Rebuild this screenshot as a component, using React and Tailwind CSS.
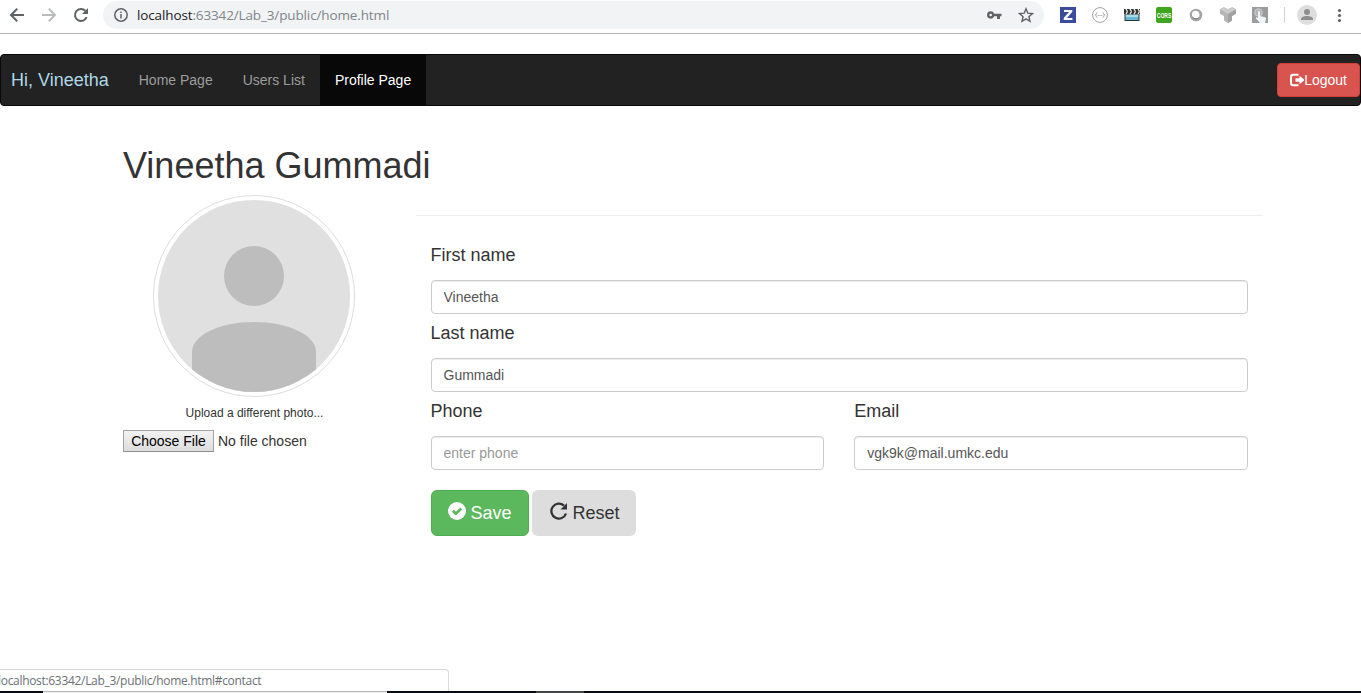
import React from "react";

function Toolbar() {
  return (
    <header className="flex h-[34px] w-full shrink-0 items-start border-b border-[#b6b4b6] bg-white">
      <div className="flex h-[30px] w-[103px] items-center pl-[9px]">
        <svg width="16" height="16" viewBox="0 0 16 16" fill="none" stroke="#5f6368" strokeWidth="2"><path d="M15 8H2.5M8.2 1.8L2 8l6.200 6.200" /></svg>
        <svg className="ml-4" width="16" height="16" viewBox="0 0 16 16" fill="none" stroke="#babcbe" strokeWidth="2"><path d="M1 8h12.500M7.800 1.800L14 8l-6.200 6.200" /></svg>
        <svg className="ml-4" width="16" height="16" viewBox="0 0 16 16" fill="none" stroke="#5f6368" strokeWidth="2"><path d="M13.600 10.200A6 6 0 1 1 12.300 3.800" /><path d="M15 1v6H9z" fill="#5f6368" stroke="none" /></svg>
      </div>
      <div className="mt-px flex h-7 w-[941px] items-center rounded-full bg-[#f1f3f4] pl-[11px] pr-[10px] font-['Open_Sans',sans-serif]">
        <svg width="14" height="14" viewBox="0 0 14 14" fill="none" stroke="#5f6368" strokeWidth="1.5"><circle cx="7" cy="7" r="6.200" /><path d="M7 6v4.500M7 3.500v1.500" /></svg>
        <span className="ml-[9px] whitespace-nowrap text-[13.500px] leading-5 tracking-[-0.13px] text-[#80868b]"><span className="text-[#202124]">localhost</span>:63342/Lab_3/public/home.html</span>
        <svg className="ml-auto" width="16" height="16" viewBox="0 0 16 16" fill="#5f6368"><path fillRule="evenodd" d="M4.700 4.300a3.700 3.700 0 1 0 3.500 5H11V12h3V9.300h1.500V6.700H8.200a3.700 3.700 0 0 0-3.500-2.400zm0 2.400a1.300 1.300 0 1 1 0 2.600 1.300 1.300 0 0 1 0-2.600z" /></svg>
        <svg className="ml-4" width="16" height="16" viewBox="0 0 16 16" fill="none" stroke="#5f6368" strokeWidth="1.400"><path d="M8 1.800l1.800 4.400 4.700.4-3.600 3.100 1.100 4.600L8 11.900l-4 2.400 1.100-4.600-3.600-3.100 4.700-.4z" /></svg>
      </div>
      <div className="flex h-[30px] items-center gap-4 pl-4">
        <svg width="16" height="16"><path fill="#3b4ba0" d="M0 0h16v16H0z" /><path fill="#fff" d="M4 3h8.300v1.800L7 10.900h5.400V13H3.700v-1.900L9 5.100H4z" /></svg>
        <svg width="16" height="16" fill="none" stroke="#a3a3a3"><circle cx="8" cy="8" r="7.400" /><path d="M5.300 5.500c-1.500 0-.5 2.500-2 2.500 1.500 0 .5 2.500 2 2.500M10.700 5.500c1.500 0 .5 2.500 2 2.500-1.500 0-.5 2.500-2 2.500" /><path d="M5.800 8.500h4.500" strokeDasharray="1 .7" /></svg>
        <svg width="16" height="16"><path fill="#333" d="M0 2h16v5H0zM.5 7h15v7H.5z" /><path stroke="#fff" strokeWidth="1.200" d="M2 2l1.500 2.500M6 2l1.500 2.500M10 2l1.500 2.500M14 2l1.500 2.500M3.500 4.500L2 7M7.500 4.500L6 7M11.500 4.500L10 7M15.500 4.500L14 7" /><path fill="#a9dceb" d="M1.500 7.500h13V10h-13z" /><path fill="#63b8d3" d="M1.500 10h13v3h-13z" /></svg>
        <div className="flex h-4 w-4 items-center justify-center rounded-[2px] bg-[#3fa51c] text-[5px] font-bold leading-4 text-white"><span className="scale-y-150">CORS</span></div>
        <svg width="16" height="16"><circle cx="8" cy="8" r="4.900" fill="none" stroke="#a4a4a4" strokeWidth="2.800" /><circle cx="7.500" cy="7.300" r="3.500" fill="#fafafa" /><path d="M4.500 10.200a4.600 4.600 0 0 0 6.500.5" fill="none" stroke="#777" /></svg>
        <svg width="16" height="16"><path fill="#b5b5b5" d="M0 2.200L4 .3l4 1.900 4-1.900 4 1.900v4.600l-4 2.200v4.500L8 16l-4-2.500V9L0 6.800z" /><path fill="#a2a2a2" d="M8 7l4-2.500 4-2.300v4.600l-4 2.200v4.500L8 16z" /><path fill="#cbcbcb" d="M0 2.200L4 .3l4 2 4-2 4 1.900-4 2.300L8 7 4 4.500z" /></svg>
        <svg width="16" height="16"><path fill="#9c9c9c" d="M0 0h16v16H0z" /><circle cx="6.500" cy="5.500" r="3.800" fill="#b4b4b4" stroke="#cfcfcf" /><path fill="#eef4f8" d="M6 5c0-1.300 2-1.300 2 0v4l5 1.200c1 .3 1.200 1 1 2L13 16H8l-4-4.500c-.5-.8.600-1.500 1.300-1L6 11z" /></svg>
      </div>
      <div className="ml-4 mt-[7px] h-4 w-px bg-[#cfd1d3]" />
      <svg className="ml-3 mt-[5px]" width="20" height="20"><circle cx="10" cy="10" r="10" fill="#dedede" /><circle cx="10" cy="7" r="3" fill="#8e8e8e" /><path d="M4 15v-1c0-4 12-4 12 0v1z" fill="#8e8e8e" /></svg>
      <svg className="ml-5 mt-2" width="6" height="16" fill="#5f6368"><circle cx="2.500" cy="2.500" r="1.600" /><circle cx="2.500" cy="7.500" r="1.600" /><circle cx="2.500" cy="12.500" r="1.600" /></svg>
    </header>
  );
}

function NavBar() {
  return (
    <nav className="mt-5 flex h-[52px] w-full shrink-0 items-stretch rounded-[4px] border border-[#080808] bg-[#222] text-sm leading-5 text-[#9d9d9d]">
      <a className="px-[10px] py-[15px] text-lg leading-5 text-[lightblue]">Hi, Vineetha</a>
      <a className="ml-[5px] px-[15px] py-[15px]">Home Page</a>
      <a className="px-[15px] py-[15px]">Users List</a>
      <a className="bg-[#080808] px-[15px] py-[15px] text-white">Profile Page</a>
      <button className="ml-auto mt-2 flex h-[34px] items-center rounded-[4px] border border-[#d43f3a] bg-[#d9534f] px-3 text-white">
        <svg width="14" height="14" viewBox="0 0 14 14" fill="#fff"><path d="M8.500 .8H3a3 3 0 0 0-3 3v6.400a3 3 0 0 0 3 3h5.500v-2H3.500A1.500 1.500 0 0 1 2 9.700V4.300a1.500 1.500 0 0 1 1.500-1.500h5z" /><path d="M9.500 2.800L14.500 7l-5 4.200V8.700H5.500V5.300h4z" /></svg>
        Logout
      </button>
    </nav>
  );
}

function Field({ label, value, placeholder }) {
  return (
    <label className="block min-w-0 flex-1">
      <span className="block text-lg leading-5">{label}</span>
      <input
        className="mt-[15px] block h-[34px] w-full rounded-[4px] border border-[#ccc] bg-white px-3 text-sm text-[#555] shadow-[inset_0_1px_1px_rgba(0,0,0,0.075)] placeholder:text-[#999]"
        defaultValue={value}
        placeholder={placeholder}
      />
    </label>
  );
}

function Avatar() {
  return (
    <div className="h-[202px] w-[202px] rounded-full border border-[#ddd] p-1">
      <svg className="block rounded-full" width="192" height="192" viewBox="0 0 192 192">
        <path fill="#e0e0e0" d="M0 0h192v192H0z" />
        <circle cx="96" cy="76" r="30" fill="#bdbdbd" />
        <path fill="#bdbdbd" d="M34 192v-40c0-17 28-30 62-30s62 13 62 30v40z" />
      </svg>
    </div>
  );
}

export default function App() {
  return (
    <div className="flex h-[693px] w-[1361px] flex-col overflow-hidden bg-white font-['Liberation_Sans',Arial,sans-serif] text-[#333]">
      <Toolbar />
      <NavBar />
      <main className="flex-1 pl-[123px]">
        <h1 className="mt-10 text-[36px] leading-[39px]">Vineetha Gummadi</h1>
        <div className="mt-[10px] flex">
          <aside className="flex w-[262px] flex-col items-center">
            <Avatar />
            <p className="mt-[10px] pl-px text-xs leading-[13px]">Upload a different photo...</p>
            <div className="mt-[10px] flex h-[22px] items-center gap-1 self-start text-sm">
              <button className="h-[22px] w-[91px] border border-[#a2a2a2] border-b-[#8e8e8e] bg-linear-to-b from-[#f3f3f3] to-[#ddd] text-center leading-5 text-black">Choose File</button>
              <span>No file chosen</span>
            </div>
          </aside>
          <section className="ml-[30.500px] mt-5 w-[847.500px]">
            <hr className="border-[#eee]" />
            <form className="px-[15px] pt-[29px]">
              <div className="flex"><Field label="First name" value="Vineetha" /></div>
              <div className="mt-[9px] flex"><Field label="Last name" value="Gummadi" /></div>
              <div className="mt-[9px] flex gap-[30px]">
                <Field label="Phone" placeholder="enter phone" />
                <Field label="Email" value="vgk9k@mail.umkc.edu" />
              </div>
              <div className="mt-5 flex gap-[3px] text-lg">
                <button type="button" className="flex h-[46px] w-[98px] items-center rounded-[6px] border border-[#4cae4c] bg-[#5cb85c] pl-4 text-white">
                  <svg className="-mt-1 mr-[5px]" width="18" height="18"><circle cx="9" cy="9" r="9" fill="#fff" /><path d="M4.800 8.700l3 3 5.400-5.200" fill="none" stroke="#5cb85c" strokeWidth="2.700" /></svg>
                  Save
                </button>
                <button type="button" className="flex h-[46px] w-[104px] items-center rounded-[6px] bg-[#ddd] pl-[18px]">
                  <svg className="-mt-1 mr-[5px]" width="18" height="18"><path d="M16 11.500A7.500 7.500 0 1 1 14 3.600" fill="none" stroke="#333" strokeWidth="2.300" /><path d="M17 1v6.500h-6.500z" fill="#333" /></svg>
                  Reset
                </button>
              </div>
            </form>
          </section>
        </div>
      </main>
      <footer className="shrink-0">
        <div className="h-[22px] w-[449px] overflow-hidden rounded-tr-[4px] border-r border-t border-[#d9d9d9] font-['Open_Sans',sans-serif]">
          <span className="-ml-[2px] block whitespace-nowrap text-[12px] leading-[22px] tracking-[-0.31px] text-[#6b6f73]">localhost:63342/Lab_3/public/home.html#contact</span>
        </div>
        <div className="flex h-[2px] bg-[#090b12]">
          <div className="ml-[43px] h-[2px] w-[344px] border-t border-[#b8b8b8] bg-[#eee]" />
          <div className="ml-[149px] h-[2px] w-12 bg-[#44464a]" />
        </div>
      </footer>
    </div>
  );
}
